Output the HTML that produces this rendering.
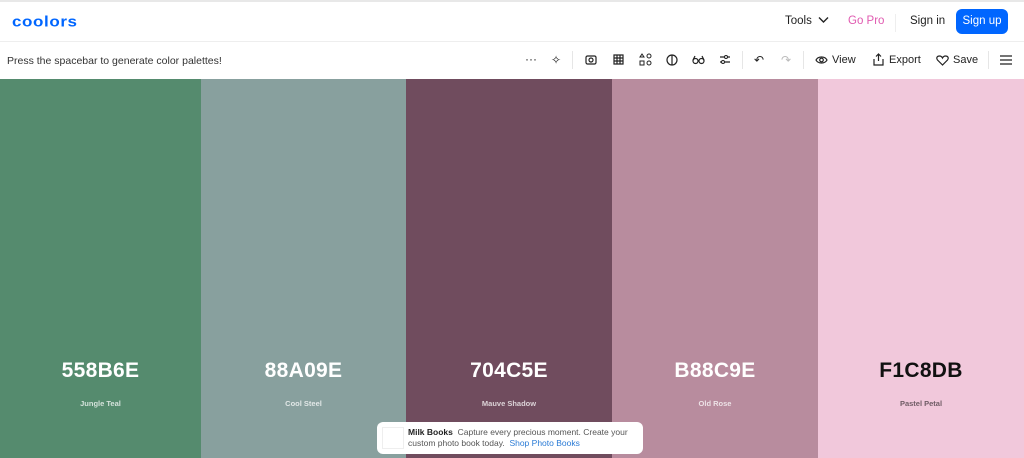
<!DOCTYPE html>
<html><head><meta charset="utf-8"><style>
*{margin:0;padding:0;box-sizing:border-box}
body{width:1024px;height:458px;overflow:hidden;font-family:"Liberation Sans",sans-serif;background:#fff;position:relative}
.top{position:absolute;left:0;top:0;width:1024px;height:42px;border-top:2px solid #e8e8e8;border-bottom:1px solid #eee}
.logo{position:absolute;left:12px;top:10px;font-size:17px;font-weight:900;color:#0066ff;letter-spacing:0.6px;transform:scaleY(.85)}
.nav{position:absolute;top:13px;font-size:11.5px;color:#222}
.btn{position:absolute;left:956px;top:7px;width:52px;height:25px;background:#0066ff;border-radius:6px;color:#fff;font-size:11.5px;text-align:center;line-height:25px}
.bar{position:absolute;left:0;top:43px;width:1024px;height:36px}
.bar .msg{position:absolute;left:7px;top:12px;font-size:10.5px;color:#333}
.ic{position:absolute;top:53px;font-size:12px;color:#222}
.sep{position:absolute;top:51px;width:1px;height:18px;background:#e6e6e6}
.col{position:absolute;top:79px;height:379px;text-align:center;overflow:hidden}
.hex{position:absolute;top:280px;width:100%;font-size:21px;font-weight:bold;color:#fff;letter-spacing:.3px}
.nm{position:absolute;top:320px;width:100%;font-size:7.5px;font-weight:bold;color:rgba(255,255,255,.75)}
.ad{position:absolute;left:377px;top:422px;width:266px;height:32px;background:#fff;border-radius:6px;font-size:8.5px;color:#555;line-height:11px}
</style></head><body>
<div class="top">
<div class="logo">coolors</div>
<div class="nav" style="left:785px">Tools <svg width="11" height="8" viewBox="0 0 11 8" style="margin-left:3px"><path d="M1 1.5l4.5 4.5 4.5-4.5" stroke="#222" stroke-width="1.4" fill="none"/></svg></div>
<div class="nav" style="left:848px;color:#e05ab0">Go Pro</div>
<div style="position:absolute;left:895px;top:12px;width:1px;height:18px;background:#eee"></div>
<div class="nav" style="left:910px">Sign in</div>
<div class="btn">Sign up</div>
</div>
<div class="bar"><div class="msg">Press the spacebar to generate color palettes!</div></div>
<div class="ic" style="left:525px;top:52px">···</div>
<div class="ic" style="left:551px">✧</div>
<div class="sep" style="left:572px"></div>
<svg style="position:absolute;left:585px;top:54px" width="12" height="11" viewBox="0 0 12 11"><rect x="1" y="2" width="10" height="8" rx="1.5" fill="none" stroke="#222" stroke-width="1.2"/><circle cx="6" cy="6" r="2" fill="none" stroke="#222" stroke-width="1.2"/></svg>
<svg style="position:absolute;left:613px;top:54px" width="11" height="11" viewBox="0 0 11 11"><path d="M1 1h9v9H1zM4 1v9M7 1v9M1 4h9M1 7h9" fill="none" stroke="#222" stroke-width="1.2"/></svg>
<svg style="position:absolute;left:639px;top:53px" width="13" height="13" viewBox="0 0 13 13"><path d="M3 1l2 3H1z" fill="none" stroke="#222"/><circle cx="10" cy="3" r="2" fill="none" stroke="#222"/><rect x="1" y="8" width="4" height="4" fill="none" stroke="#222"/><circle cx="10" cy="10" r="2" fill="none" stroke="#222"/></svg>
<svg style="position:absolute;left:666px;top:54px" width="12" height="12" viewBox="0 0 12 12"><circle cx="6" cy="6" r="5" fill="none" stroke="#222" stroke-width="1.2"/><path d="M6 1v10" stroke="#222" stroke-width="1.2"/></svg>
<svg style="position:absolute;left:692px;top:55px" width="13" height="10" viewBox="0 0 13 10"><circle cx="3.5" cy="6" r="2.5" fill="none" stroke="#222" stroke-width="1.2"/><circle cx="9.5" cy="6" r="2.5" fill="none" stroke="#222" stroke-width="1.2"/><path d="M1 5L3 1M12 5L10 1" stroke="#222" stroke-width="1.2"/></svg>
<svg style="position:absolute;left:719px;top:54px" width="12" height="11" viewBox="0 0 12 11"><path d="M1 3h10M1 8h10" stroke="#222" stroke-width="1.2"/><circle cx="7" cy="3" r="1.5" fill="#fff" stroke="#222"/><circle cx="4" cy="8" r="1.5" fill="#fff" stroke="#222"/></svg>
<div class="sep" style="left:742px"></div>
<div class="ic" style="left:754px">↶</div>
<div class="ic" style="left:781px;color:#bbb">↷</div>
<div class="sep" style="left:803px"></div>
<svg style="position:absolute;left:815px;top:55px" width="13" height="10" viewBox="0 0 13 10"><path d="M1 5C3 1 10 1 12 5 10 9 3 9 1 5z" fill="none" stroke="#222" stroke-width="1.2"/><circle cx="6.5" cy="5" r="1.8" fill="none" stroke="#222" stroke-width="1.2"/></svg>
<div class="ic" style="left:832px;top:54px;font-size:11px">View</div>
<svg style="position:absolute;left:873px;top:53px" width="11" height="13" viewBox="0 0 11 13"><path d="M5.5 8V1M3 3.5l2.5-2.5 2.5 2.5M1 6v6h9V6" fill="none" stroke="#222" stroke-width="1.2"/></svg>
<div class="ic" style="left:889px;top:54px;font-size:11px">Export</div>
<svg style="position:absolute;left:936px;top:55px" width="13" height="11" viewBox="0 0 13 11"><path d="M6.5 10L1.5 5C0 3 1 1 3.5 1 5 1 6 2 6.5 3 7 2 8 1 9.5 1 12 1 13 3 11.5 5z" fill="none" stroke="#222" stroke-width="1.2"/></svg>
<div class="ic" style="left:953px;top:54px;font-size:11px">Save</div>
<div class="sep" style="left:988px"></div>
<svg style="position:absolute;left:1000px;top:55px" width="12" height="10" viewBox="0 0 12 10"><path d="M0 1h12M0 5h12M0 9h12" stroke="#222" stroke-width="1.2"/></svg>

<div class="col" style="left:0;width:201px;background:#558B6E"><div class="hex">558B6E</div><div class="nm">Jungle Teal</div></div>
<div class="col" style="left:201px;width:205px;background:#88A09E"><div class="hex">88A09E</div><div class="nm">Cool Steel</div></div>
<div class="col" style="left:406px;width:206px;background:#704C5E"><div class="hex">704C5E</div><div class="nm">Mauve Shadow</div></div>
<div class="col" style="left:612px;width:206px;background:#B88C9E"><div class="hex">B88C9E</div><div class="nm">Old Rose</div></div>
<div class="col" style="left:818px;width:206px;background:#F1C8DB"><div class="hex" style="color:#111">F1C8DB</div><div class="nm" style="color:rgba(0,0,0,.55)">Pastel Petal</div></div>
<div class="ad"><div style="position:absolute;left:5px;top:5px;width:22px;height:22px;border:1px solid #eee"></div>
<div style="position:absolute;left:31px;top:5px;width:235px"><b style="color:#222">Milk Books</b>&nbsp; Capture every precious moment. Create your custom photo book today.&nbsp; <span style="color:#2a7bd6">Shop Photo Books</span></div></div>
</body></html>
